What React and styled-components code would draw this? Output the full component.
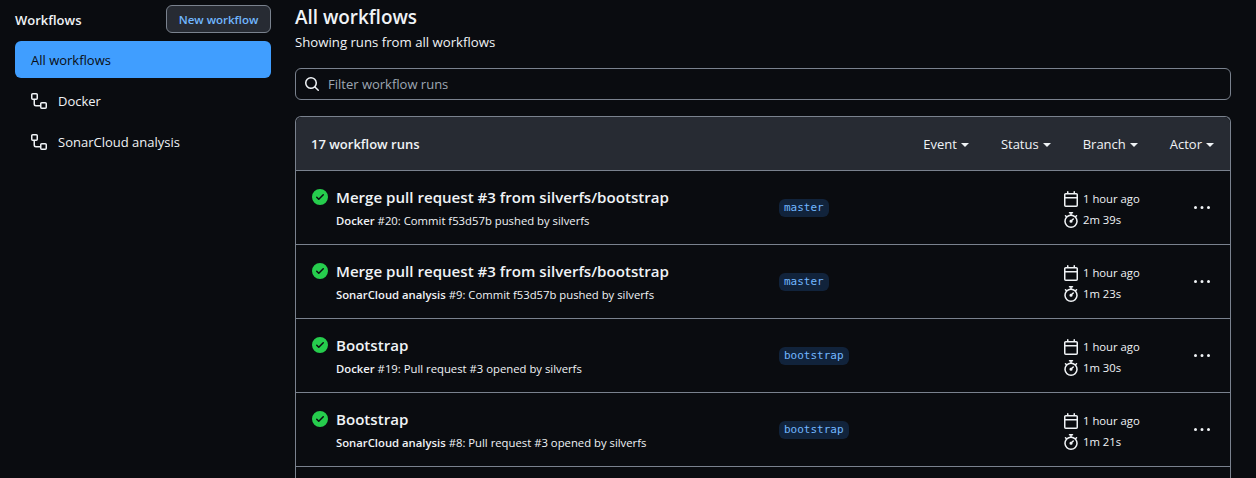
import React from "react";
import styled, { createGlobalStyle } from "styled-components";

const runs = [
  { title: "Merge pull request #3 from silverfs/bootstrap", flow: "Docker", num: "#20", text: "Commit f53d57b pushed by silverfs", branch: "master", time: "2m 39s" },
  { title: "Merge pull request #3 from silverfs/bootstrap", flow: "SonarCloud analysis", num: "#9", text: "Commit f53d57b pushed by silverfs", branch: "master", time: "1m 23s" },
  { title: "Bootstrap", flow: "Docker", num: "#19", text: "Pull request #3 opened by silverfs", branch: "bootstrap", time: "1m 30s" },
  { title: "Bootstrap", flow: "SonarCloud analysis", num: "#8", text: "Pull request #3 opened by silverfs", branch: "bootstrap", time: "1m 21s" },
];

const Icon = ({ d, size = 16, color = "currentColor" }) => (
  <svg width={size} height={size} viewBox="0 0 16 16" fill={color} style={{ flex: "none", display: "block" }}>
    <path d={d} />
  </svg>
);

const workflowPath = "M0 1.75C0 .784.784 0 1.75 0h3.5C6.216 0 7 .784 7 1.75v3.5A1.75 1.75 0 0 1 5.25 7H4v4a1 1 0 0 0 1 1h4v-1.25C9 9.784 9.784 9 10.75 9h3.5c.966 0 1.75.784 1.75 1.75v3.5A1.75 1.75 0 0 1 14.25 16h-3.5A1.75 1.75 0 0 1 9 14.25v-.75H5A2.5 2.5 0 0 1 2.5 11V7h-.75A1.75 1.75 0 0 1 0 5.25Zm1.75-.25a.25.25 0 0 0-.25.25v3.5c0 .138.112.25.25.25h3.5a.25.25 0 0 0 .25-.25v-3.5a.25.25 0 0 0-.25-.25Zm9 9a.25.25 0 0 0-.25.25v3.5c0 .138.112.25.25.25h3.5a.25.25 0 0 0 .25-.25v-3.5a.25.25 0 0 0-.25-.25Z";
const checkPath = "M8 16A8 8 0 1 1 8 0a8 8 0 0 1 0 16Zm3.78-9.72a.751.751 0 0 0-.018-1.042.751.751 0 0 0-1.042-.018L6.75 9.19 5.28 7.72a.751.751 0 0 0-1.042.018.751.751 0 0 0-.018 1.042l2 2a.75.75 0 0 0 1.06 0Z";
const calendarPath = "M4.75 0a.75.75 0 0 1 .75.75V2h5V.75a.75.75 0 0 1 1.5 0V2h1.25c.966 0 1.75.784 1.75 1.75v10.5A1.75 1.75 0 0 1 13.25 16H2.75A1.75 1.75 0 0 1 1 14.25V3.75C1 2.784 1.784 2 2.75 2H4V.75A.75.75 0 0 1 4.75 0ZM2.5 7.5v6.75c0 .138.112.25.25.25h10.5a.25.25 0 0 0 .25-.25V7.5Zm10.75-4H2.75a.25.25 0 0 0-.25.25V6h11V3.75a.25.25 0 0 0-.25-.25Z";
const stopwatchPath = "M5.75.75A.75.75 0 0 1 6.5 0h3a.75.75 0 0 1 0 1.5h-.75v1l-.001.041a6.724 6.724 0 0 1 3.464 1.435l.007-.006.75-.75a.749.749 0 0 1 1.275.326.749.749 0 0 1-.215.734l-.75.75-.006.007a6.75 6.75 0 1 1-10.548 0L2.72 5.03l-.75-.75a.751.751 0 0 1 .018-1.042.751.751 0 0 1 1.042-.018l.75.75.007.006A6.72 6.72 0 0 1 7.25 2.541V1.5H6.5a.75.75 0 0 1-.75-.75ZM8 14.5a5.25 5.25 0 1 0-.001-10.501A5.25 5.25 0 0 0 8 14.5Zm.389-6.7 1.33-1.33a.75.75 0 1 1 1.061 1.06L9.45 8.861A1.503 1.503 0 0 1 8 10.75a1.499 1.499 0 1 1 .389-2.95Z";
const searchPath = "M10.68 11.74a6 6 0 0 1-7.922-8.982 6 6 0 0 1 8.982 7.922l3.04 3.04a.749.749 0 0 1-.326 1.275.749.749 0 0 1-.734-.215ZM11.5 7a4.499 4.499 0 1 0-8.997 0A4.499 4.499 0 0 0 11.5 7Z";
const kebabPath = "M8 9a1.5 1.5 0 1 0 0-3 1.5 1.5 0 0 0 0 3ZM1.5 9a1.5 1.5 0 1 0 0-3 1.5 1.5 0 0 0 0 3Zm13 0a1.5 1.5 0 1 0 0-3 1.5 1.5 0 0 0 0 3Z";

export default function App() {
  return (
    <>
      <GlobalStyle />
      <Page>
        <Sidebar>
          <SideHead>
            <SideTitle>Workflows</SideTitle>
            <NewButton>New workflow</NewButton>
          </SideHead>
          <SideActive>All workflows</SideActive>
          <SideItem>
            <Icon d={workflowPath} />
            Docker
          </SideItem>
          <SideItem>
            <Icon d={workflowPath} />
            SonarCloud analysis
          </SideItem>
        </Sidebar>
        <Main>
          <Title>All workflows</Title>
          <Subtitle>Showing runs from all workflows</Subtitle>
          <Filter>
            <Icon d={searchPath} />
            <FilterText>Filter workflow runs</FilterText>
          </Filter>
          <RunsBox>
            <RunsHead>
              <RunsCount>17 workflow runs</RunsCount>
              <Filters>
                {["Event", "Status", "Branch", "Actor"].map((name) => (
                  <FilterMenu key={name}>
                    {name}
                    <Caret />
                  </FilterMenu>
                ))}
              </Filters>
            </RunsHead>
            {runs.map((run) => (
              <Run key={run.flow + run.num}>
                <RunMain>
                  <Icon d={checkPath} color="#26cd4d" />
                  <div>
                    <RunTitle>{run.title}</RunTitle>
                    <RunMeta>
                      <b>{run.flow}</b> {run.num}: {run.text}
                    </RunMeta>
                  </div>
                </RunMain>
                <BranchCell>
                  <BranchTag>{run.branch}</BranchTag>
                </BranchCell>
                <Times>
                  <TimeRow>
                    <Icon d={calendarPath} />1 hour ago
                  </TimeRow>
                  <TimeRow>
                    <Icon d={stopwatchPath} />
                    {run.time}
                  </TimeRow>
                </Times>
                <Kebab>
                  <Icon d={kebabPath} />
                </Kebab>
              </Run>
            ))}
            <Run />
          </RunsBox>
        </Main>
      </Page>
    </>
  );
}

const GlobalStyle = createGlobalStyle`
  html, body {
    margin: 0;
    height: 100%;
    overflow: hidden;
    background: #0a0c10;
  }
  body {
    color: #f0f3f6;
    font-family: "Open Sans", "Noto Sans", sans-serif;
    font-size: 13px;
  }
`;

const Page = styled.div`
  display: flex;
  align-items: flex-start;
  gap: 24px;
  height: 478px;
  overflow: hidden;
  padding: 0 25px 0 15px;
`;

const Sidebar = styled.aside`
  width: 256px;
  flex: none;
`;

const SideHead = styled.div`
  display: flex;
  justify-content: space-between;
  align-items: center;
  padding-top: 5px;
  margin-bottom: 8px;
`;

const SideTitle = styled.h2`
  margin: 2px 0 0;
  font-size: 13px;
  font-weight: 600;
`;

const NewButton = styled.button`
  width: 105px;
  height: 28px;
  padding: 0;
  border: 1px solid #7a828e;
  border-radius: 6px;
  background: #272b33;
  color: #71b7ff;
  font: 600 11.5px "Open Sans", sans-serif;
`;

const SideActive = styled.div`
  height: 37px;
  display: flex;
  align-items: center;
  padding-left: 16px;
  border-radius: 6px;
  background: #409eff;
  color: #0a0c10;
  font-size: 13px;
`;

const SideItem = styled.div`
  height: 37px;
  margin-top: 4px;
  display: flex;
  align-items: center;
  gap: 11px;
  padding-left: 16px;
  font-size: 13px;
`;

const Main = styled.main`
  width: 936px;
  flex: none;
`;

const Title = styled.h1`
  margin: 5px 0 0;
  font-size: 18.9px;
  line-height: 24px;
  font-weight: 600;
`;

const Subtitle = styled.p`
  margin: 3px 0 0;
  font-size: 13.2px;
  line-height: 20px;
`;

const Filter = styled.div`
  height: 32px;
  box-sizing: border-box;
  margin-top: 16px;
  display: flex;
  align-items: center;
  gap: 8px;
  padding: 0 8px;
  border: 1px solid #7a828e;
  border-radius: 6px;
`;

const FilterText = styled.span`
  color: #9ea7b3;
  font-size: 13px;
`;

const RunsBox = styled.section`
  margin-top: 16px;
  border: 1px solid #7a828e;
  border-bottom: 0;
  border-radius: 6px 6px 0 0;
`;

const RunsHead = styled.div`
  height: 53px;
  display: flex;
  justify-content: space-between;
  align-items: center;
  padding: 0 16px 0 15px;
  background: #272b33;
  border-radius: 6px 6px 0 0;
`;

const RunsCount = styled.div`
  font-weight: 600;
  font-size: 13px;
`;

const Filters = styled.div`
  display: flex;
  gap: 32px;
`;

const FilterMenu = styled.div`
  display: flex;
  align-items: center;
  gap: 4px;
  font-size: 13px;
`;

const Caret = styled.span`
  border-style: solid;
  border-width: 4px 4px 0;
  border-color: #f0f3f6 transparent transparent;
  margin-top: 2px;
`;

const Run = styled.article`
  height: 73px;
  display: grid;
  grid-template-columns: 483px 284px 1fr 36px;
  align-items: center;
  border-top: 1px solid #7a828e;
`;

const RunMain = styled.div`
  display: flex;
  gap: 8px;
  padding-left: 16px;
  align-self: start;
  padding-top: 16px;
  > svg {
    margin-top: 2px;
  }
`;

const RunTitle = styled.div`
  font-size: 15.1px;
  line-height: 20px;
  font-weight: 600;
`;

const RunMeta = styled.div`
  margin-top: 6px;
  font-size: 11.3px;
  line-height: 16px;
  b {
    font-weight: 600;
  }
`;

const BranchCell = styled.div`
  display: flex;
`;

const BranchTag = styled.span`
  padding: 0 5px;
  height: 18px;
  line-height: 18px;
  border-radius: 6px;
  background: #11233b;
  color: #71b7ff;
  font-family: "DejaVu Sans Mono", monospace;
  font-size: 11px;
`;

const Times = styled.div`
  display: flex;
  flex-direction: column;
  gap: 5px;
  margin-top: 3px;
`;

const TimeRow = styled.div`
  display: flex;
  align-items: center;
  gap: 4px;
  font-size: 11.3px;
  line-height: 16px;
`;

const Kebab = styled.div`
  display: flex;
`;
